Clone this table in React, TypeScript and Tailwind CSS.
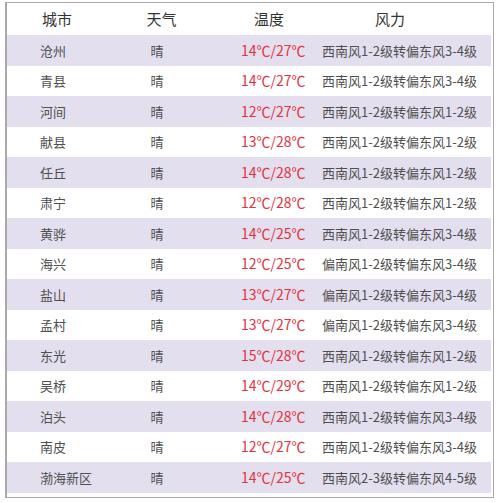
const rows: [string, string, string][] = [
  ["沧州", "14℃/27℃", "西南风1-2级转偏东风3-4级"],
  ["青县", "14℃/27℃", "西南风1-2级转偏东风3-4级"],
  ["河间", "12℃/27℃", "西南风1-2级转偏东风1-2级"],
  ["献县", "13℃/28℃", "西南风1-2级转偏东风1-2级"],
  ["任丘", "14℃/28℃", "西南风1-2级转偏东风1-2级"],
  ["肃宁", "12℃/28℃", "西南风1-2级转偏东风1-2级"],
  ["黄骅", "14℃/25℃", "西南风1-2级转偏东风3-4级"],
  ["海兴", "12℃/25℃", "偏南风1-2级转偏东风3-4级"],
  ["盐山", "13℃/27℃", "偏南风1-2级转偏东风3-4级"],
  ["孟村", "13℃/27℃", "偏南风1-2级转偏东风3-4级"],
  ["东光", "15℃/28℃", "西南风1-2级转偏东风1-2级"],
  ["吴桥", "14℃/29℃", "西南风1-2级转偏东风1-2级"],
  ["泊头", "14℃/28℃", "西南风1-2级转偏东风3-4级"],
  ["南皮", "12℃/27℃", "西南风1-2级转偏东风3-4级"],
  ["渤海新区", "14℃/25℃", "西南风2-3级转偏东风4-5级"],
];

const App = () => {
  return (
    <div className="w-[500px] h-[503px] bg-white pt-[2px] pl-[5px] font-['Noto_Sans_CJK_SC',sans-serif]">
      <div className="w-[489px] h-[496px] border border-l-2 border-[#a9a9a9] pr-[2px] flex flex-col">
        <div className="flex h-[32px] items-center text-[15px] text-[#333]">
          <div className="w-[103px] pl-[35px]">城市</div>
          <div className="w-[103px] text-center">天气</div>
          <div className="w-[110px] pl-[2px] text-center">温度</div>
          <div className="flex-1 pr-[34px] text-center">风力</div>
        </div>
        {rows.map((r, i) => (
          <div
            key={r[0]}
            className={
              "flex h-[30.5px] items-center text-[13px] text-[#4f4f4f] " +
              (i % 2 === 0 ? "bg-[#e3dfef]" : "bg-white")
            }
          >
            <div className="w-[103px] pl-[33px]">{r[0]}</div>
            <div className="w-[103px] pr-[8px] text-center">晴</div>
            <div className="w-[110px] pl-[12px] text-center text-[14px] text-[#e3323c]">{r[1]}</div>
            <div className="flex-1 pr-[14px] flex justify-center whitespace-nowrap">{r[2]}</div>
          </div>
        ))}
      </div>
    </div>
  );
};

export default App;
